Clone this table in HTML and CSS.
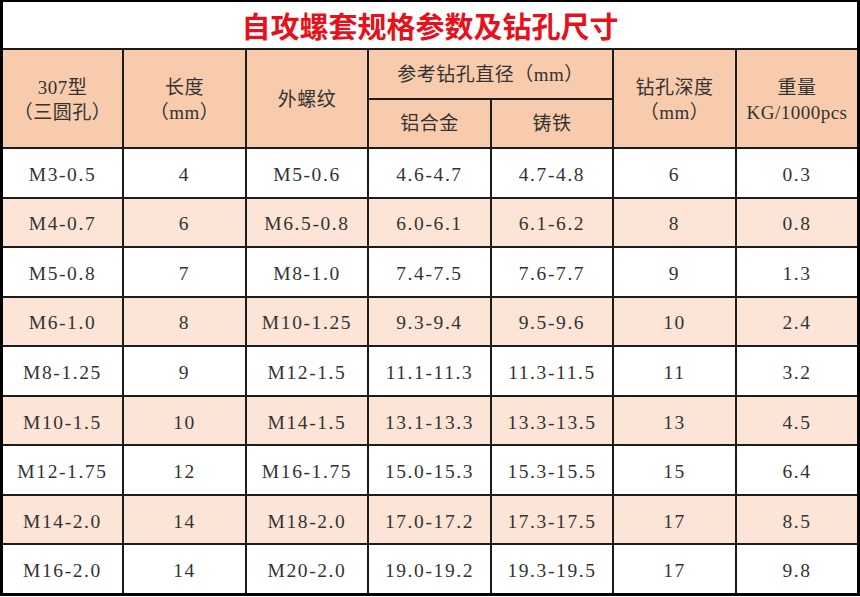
FILE: index.html
```html
<!DOCTYPE html>
<html lang="zh-CN">
<head>
<meta charset="utf-8">
<title>自攻螺套规格参数及钻孔尺寸</title>
<link rel="stylesheet" href="styles.css">
</head>
<body>
<div class="sheet">
  <div class="cell title">自攻螺套规格参数及钻孔尺寸</div>

  <div class="cell head span-r2"><span>307型</span><span>（三圆孔）</span></div>
  <div class="cell head span-r2"><span>长度</span><span>（mm）</span></div>
  <div class="cell head span-r2"><span>外螺纹</span></div>
  <div class="cell head span-c2"><span>参考钻孔直径（mm）</span></div>
  <div class="cell head span-r2"><span>钻孔深度</span><span>（mm）</span></div>
  <div class="cell head span-r2"><span>重量</span><span>KG/1000pcs</span></div>
  <div class="cell head"><span>铝合金</span></div>
  <div class="cell head"><span>铸铁</span></div>

  <div class="cell">M3-0.5</div><div class="cell">4</div><div class="cell">M5-0.6</div><div class="cell">4.6-4.7</div><div class="cell">4.7-4.8</div><div class="cell">6</div><div class="cell">0.3</div>
  <div class="cell alt">M4-0.7</div><div class="cell alt">6</div><div class="cell alt">M6.5-0.8</div><div class="cell alt">6.0-6.1</div><div class="cell alt">6.1-6.2</div><div class="cell alt">8</div><div class="cell alt">0.8</div>
  <div class="cell">M5-0.8</div><div class="cell">7</div><div class="cell">M8-1.0</div><div class="cell">7.4-7.5</div><div class="cell">7.6-7.7</div><div class="cell">9</div><div class="cell">1.3</div>
  <div class="cell alt">M6-1.0</div><div class="cell alt">8</div><div class="cell alt">M10-1.25</div><div class="cell alt">9.3-9.4</div><div class="cell alt">9.5-9.6</div><div class="cell alt">10</div><div class="cell alt">2.4</div>
  <div class="cell">M8-1.25</div><div class="cell">9</div><div class="cell">M12-1.5</div><div class="cell">11.1-11.3</div><div class="cell">11.3-11.5</div><div class="cell">11</div><div class="cell">3.2</div>
  <div class="cell alt">M10-1.5</div><div class="cell alt">10</div><div class="cell alt">M14-1.5</div><div class="cell alt">13.1-13.3</div><div class="cell alt">13.3-13.5</div><div class="cell alt">13</div><div class="cell alt">4.5</div>
  <div class="cell">M12-1.75</div><div class="cell">12</div><div class="cell">M16-1.75</div><div class="cell">15.0-15.3</div><div class="cell">15.3-15.5</div><div class="cell">15</div><div class="cell">6.4</div>
  <div class="cell alt">M14-2.0</div><div class="cell alt">14</div><div class="cell alt">M18-2.0</div><div class="cell alt">17.0-17.2</div><div class="cell alt">17.3-17.5</div><div class="cell alt">17</div><div class="cell alt">8.5</div>
  <div class="cell">M16-2.0</div><div class="cell">14</div><div class="cell">M20-2.0</div><div class="cell">19.0-19.2</div><div class="cell">19.3-19.5</div><div class="cell">17</div><div class="cell">9.8</div>
</div>
</body>
</html>
```

FILE: styles.css
```css
* { box-sizing: border-box; }
html, body { margin: 0; padding: 0; background: #ffffff; }

.sheet {
  width: 860px;
  height: 596px;
  display: grid;
  grid-template-columns: 119px 121px 120px 121px 120px 121px 120px;
  grid-template-rows: 46px 48px 47px repeat(9, 1fr);
  gap: 2px;
  background: #1c1c1c;
  border: 3px solid #000;
  border-top-width: 2px;
  font-family: "Liberation Serif", "Noto Sans CJK SC", serif;
  font-size: 19.5px;
  color: #333333;
}

.cell {
  background: #ffffff;
  display: flex;
  flex-direction: column;
  align-items: center;
  justify-content: center;
  letter-spacing: 1.6px;
  white-space: nowrap;
  padding-top: 4px;
}

.cell.alt { background: #fce4d6; }

.title {
  grid-column: 1 / -1;
  font-family: "Noto Sans CJK SC", sans-serif;
  font-weight: 700;
  font-size: 29px;
  color: #e8101a;
  letter-spacing: 0;
  padding-top: 0;
}

.head {
  background: #f8cbad;
  line-height: 25px;
  letter-spacing: 0.5px;
  font-size: 19px;
  padding-top: 0;
}

.head span { display: block; }

.span-r2 { padding-top: 2px; }
.span-r2 { grid-row: span 2; }
.span-c2 { grid-column: span 2; }
```
